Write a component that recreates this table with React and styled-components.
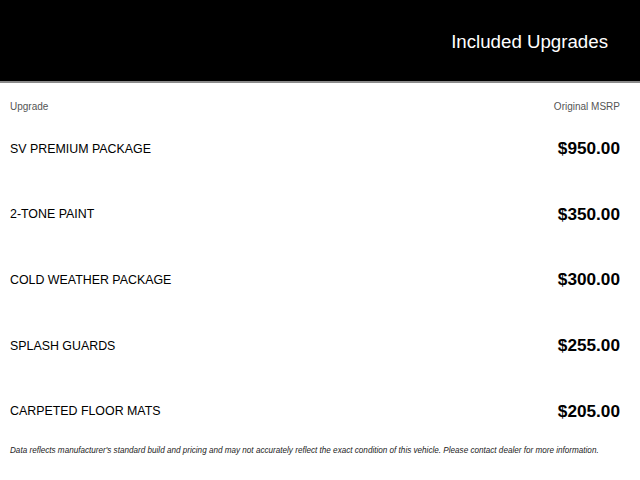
import React from 'react';
import styled, { createGlobalStyle } from 'styled-components';

const upgrades = [
  { name: 'SV PREMIUM PACKAGE', price: '$950.00' },
  { name: '2-TONE PAINT', price: '$350.00' },
  { name: 'COLD WEATHER PACKAGE', price: '$300.00' },
  { name: 'SPLASH GUARDS', price: '$255.00' },
  { name: 'CARPETED FLOOR MATS', price: '$205.00' },
];

const GlobalStyle = createGlobalStyle`
  body {
    margin: 0;
    background: #fff;
    font-family: 'Liberation Sans', Arial, sans-serif;
  }
`;

const App = () => {
  return (
    <>
      <GlobalStyle />
      <Header>
        <h1>Included Upgrades</h1>
      </Header>
      <Table>
        <LabelRow>
          <span>Upgrade</span>
          <span>Original MSRP</span>
        </LabelRow>
        {upgrades.map((item) => (
          <Row key={item.name}>
            <span className='name'>{item.name}</span>
            <span className='price'>{item.price}</span>
          </Row>
        ))}
        <Disclaimer>
          Data reflects manufacturer's standard build and pricing and may not
          accurately reflect the exact condition of this vehicle. Please contact
          dealer for more information.
        </Disclaimer>
      </Table>
    </>
  );
};

const Header = styled.header`
  box-sizing: border-box;
  height: 83px;
  padding: 2px 32px 0 0;
  background: #000;
  border-bottom: 2px solid #8a8a8a;
  display: flex;
  align-items: center;
  justify-content: flex-end;
  h1 {
    margin: 0;
    color: #fff;
    font-weight: 400;
    font-size: 18.7px;
    line-height: 22px;
  }
`;

const Table = styled.section`
  padding: 0 20px 0 10px;
`;

const LabelRow = styled.div`
  display: flex;
  justify-content: space-between;
  padding: 18px 0 3px;
  font-size: 10px;
  line-height: 12px;
  color: #555;
`;

const Row = styled.div`
  display: flex;
  justify-content: space-between;
  align-items: center;
  height: 65.6px;
  .name {
    font-size: 12.4px;
    color: #000;
  }
  .price {
    font-size: 17.2px;
    font-weight: 700;
    color: #000;
  }
`;

const Disclaimer = styled.p`
  margin: 1px 0 0;
  font-size: 8.15px;
  line-height: 12px;
  font-style: italic;
  color: #222;
`;

export default App;
